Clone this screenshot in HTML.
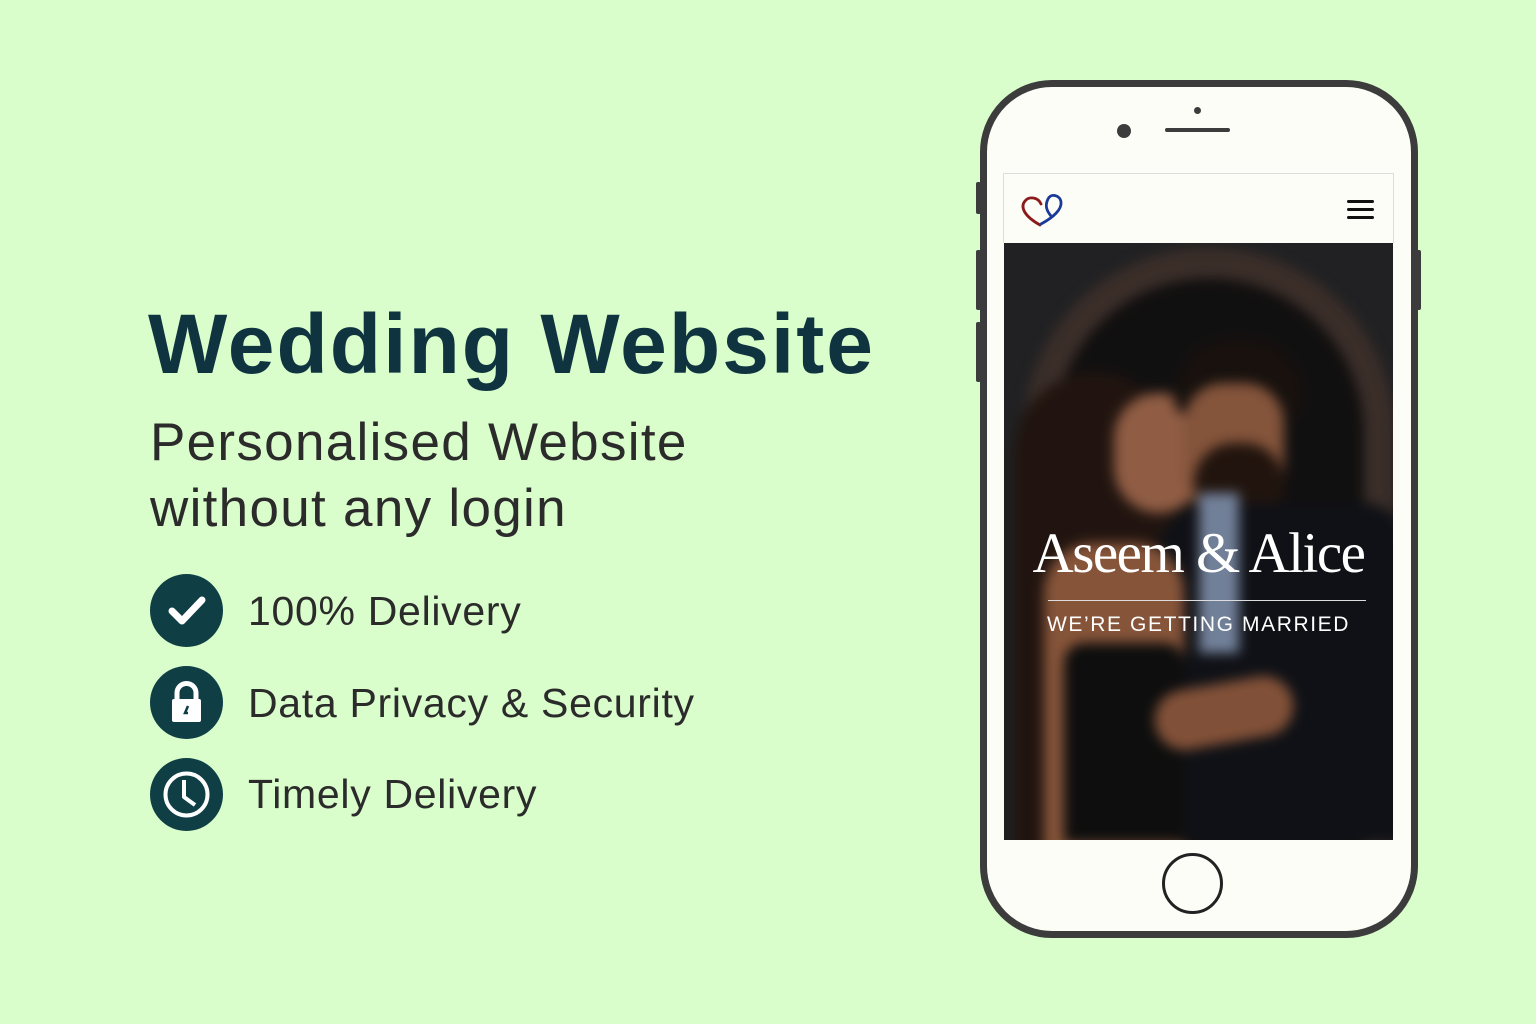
<!DOCTYPE html>
<html><head><meta charset="utf-8"><style>
*{margin:0;padding:0;box-sizing:border-box}
body{width:1536px;height:1024px;background:#d9fdcb;position:relative;overflow:hidden;font-family:"Liberation Sans",sans-serif}
h1{position:absolute;left:148px;top:296px;font-size:84px;font-weight:bold;color:#0f3440;letter-spacing:2px}
.sub{position:absolute;left:150px;top:410px;font-size:53px;line-height:66px;color:#2b2b2b;letter-spacing:1.3px}
.ic{position:absolute;left:150px;width:73px;height:73px;border-radius:50%;background:#0f3e45}
.li{position:absolute;left:248px;font-size:41px;color:#2b2b2b;letter-spacing:0.7px}
.phone{position:absolute;left:980px;top:80px;width:438px;height:858px;border:7px solid #3c3c3c;border-radius:72px;background:#fdfdf8}
.btn{position:absolute;background:#3c3c3c;width:5px;border-radius:2px}
.photo{position:absolute;left:1004px;top:243px;width:389px;height:597px;overflow:hidden;background:#2a2a2c}
.bl{position:absolute;inset:0;filter:blur(6px)}
</style></head><body>
<h1>Wedding Website</h1>
<div class="sub">Personalised Website<br>without any login</div>
<div class="ic" style="top:574px"><svg width="73" height="73"><path d="M22 37 L32 47 L52 26" stroke="#fff" stroke-width="7" fill="none" stroke-linecap="round" stroke-linejoin="round"/></svg></div>
<div class="li" style="top:588px">100% Delivery</div>
<div class="ic" style="top:666px"><svg width="73" height="73"><path d="M27 34 V27 A9.5 9.5 0 0 1 46 27 V34" stroke="#fff" stroke-width="5" fill="none"/><rect x="22" y="33" width="29" height="23" rx="2" fill="#fff"/><path d="M38 40 L35 47 L38 47" stroke="#0f3e45" stroke-width="2.5" fill="none"/></svg></div>
<div class="li" style="top:680px">Data Privacy &amp; Security</div>
<div class="ic" style="top:758px"><svg width="73" height="73"><circle cx="36.5" cy="36.5" r="21" stroke="#fff" stroke-width="4" fill="none"/><path d="M34 22 V39 L45 47" stroke="#fff" stroke-width="4" fill="none" stroke-linejoin="round"/></svg></div>
<div class="li" style="top:771px">Timely Delivery</div>

<div class="btn" style="left:976px;top:182px;height:32px"></div>
<div class="btn" style="left:976px;top:250px;height:60px"></div>
<div class="btn" style="left:976px;top:322px;height:60px"></div>
<div class="btn" style="left:1416px;top:250px;height:60px"></div>
<div class="phone"></div>
<div style="position:absolute;left:1117px;top:124px;width:14px;height:14px;border-radius:50%;background:#3c3c3c"></div>
<div style="position:absolute;left:1194px;top:107px;width:7px;height:7px;border-radius:50%;background:#3c3c3c"></div>
<div style="position:absolute;left:1165px;top:128px;width:65px;height:4px;border-radius:2px;background:#3c3c3c"></div>
<div style="position:absolute;left:1003px;top:173px;width:391px;height:70px;border:1px solid #ddd;border-bottom:none;background:#fdfdf8"></div>
<svg style="position:absolute;left:1018px;top:192px" width="50" height="40">
<path d="M23 12 C20 5 11 4 7 9 C2 15 6 24 22 33" stroke="#8b1a1a" stroke-width="2.8" fill="none" stroke-linecap="round"/>
<path d="M23 32 C36 25 44 17 43 10 C42 3 33 1 30 7 C27 13 28 18 33 24" stroke="#1a3a9a" stroke-width="2.8" fill="none" stroke-linecap="round"/>
</svg>
<div style="position:absolute;left:1347px;top:200px;width:27px;height:3px;background:#111;box-shadow:0 8px 0 #111,0 16px 0 #111;border-radius:2px"></div>
<div class="photo">
<div class="bl">
<div style="position:absolute;left:20px;top:5px;width:370px;height:700px;border-radius:185px 185px 0 0;background:#4a3a34"></div>
<div style="position:absolute;left:50px;top:35px;width:310px;height:700px;border-radius:155px 155px 0 0;background:#161414"></div>
<div style="position:absolute;left:10px;top:130px;width:160px;height:480px;border-radius:80px 80px 0 0;background:#2a1a14"></div>
<div style="position:absolute;left:110px;top:150px;width:90px;height:120px;border-radius:45px;background:#b47455"></div>
<div style="position:absolute;left:170px;top:95px;width:130px;height:80px;border-radius:60px 60px 20px 20px;background:#1e1612"></div>
<div style="position:absolute;left:180px;top:140px;width:100px;height:130px;border-radius:40px;background:#a5694a"></div>
<div style="position:absolute;left:190px;top:200px;width:90px;height:80px;border-radius:40px;background:#2a1a12"></div>
<div style="position:absolute;left:150px;top:260px;width:250px;height:340px;border-radius:60px 40px 0 0;background:#14161c"></div>
<div style="position:absolute;left:195px;top:250px;width:40px;height:160px;background:#8ea0c0"></div>
<div style="position:absolute;left:40px;top:300px;width:140px;height:320px;border-radius:50px 50px 0 0;background:#a86a48"></div>
<div style="position:absolute;left:60px;top:400px;width:120px;height:200px;background:#121212;border-radius:20px 20px 0 0"></div>
<div style="position:absolute;left:150px;top:440px;width:140px;height:60px;border-radius:30px;background:#a26546;transform:rotate(-10deg)"></div>
</div>
<div style="position:absolute;inset:0;background:rgba(0,0,0,0.2)"></div>
<div style="position:absolute;left:0;width:389px;top:278px;text-align:center;font-family:'Liberation Serif',serif;font-size:57px;color:#fff;letter-spacing:-1.5px">Aseem &amp; Alice</div>
<div style="position:absolute;left:44px;top:357px;width:318px;height:1px;background:#ddd"></div>
<div style="position:absolute;left:0;width:389px;top:370px;text-align:center;font-size:21px;color:#fff;letter-spacing:1.6px">WE’RE GETTING MARRIED</div>
</div>
<div style="position:absolute;left:1162px;top:853px;width:61px;height:61px;border:3px solid #222;border-radius:50%"></div>
</body></html>
